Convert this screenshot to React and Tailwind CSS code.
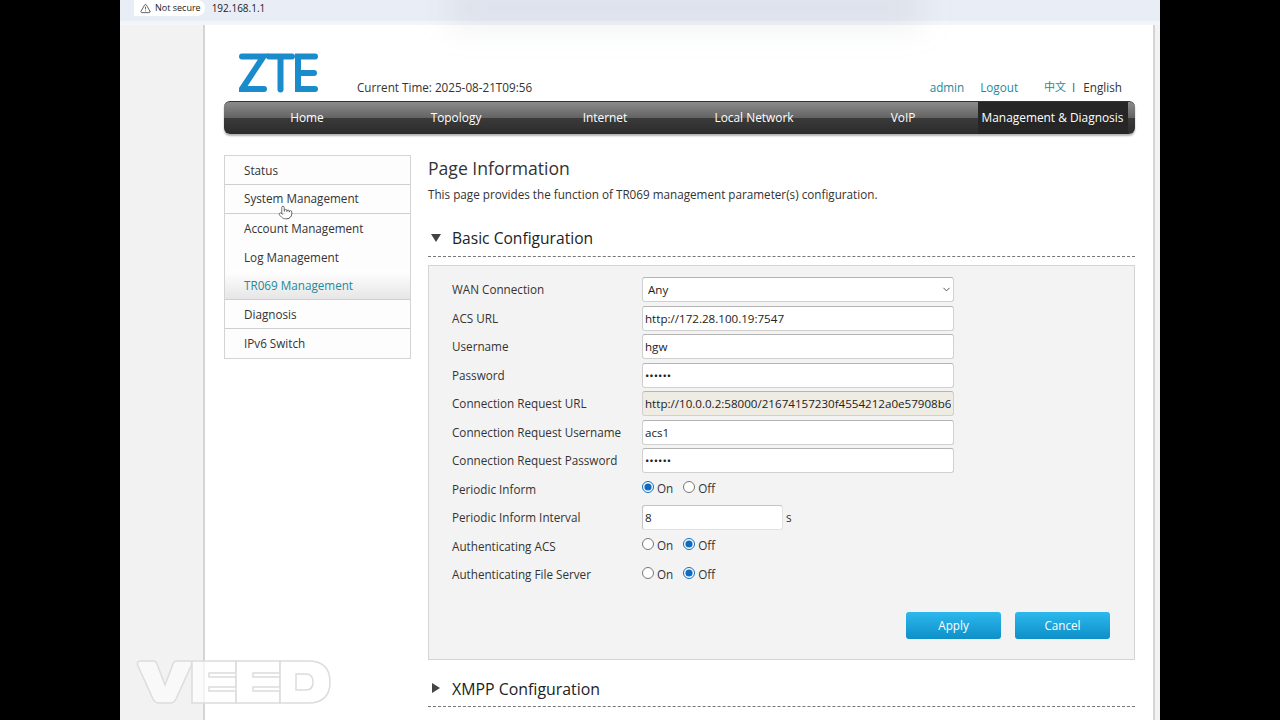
import { ChevronDown, TriangleAlert, Pointer } from 'lucide-react'

const NAV = ['Home', 'Topology', 'Internet', 'Local Network', 'VoIP']

const MENU = [
  { label: 'Status', line: true },
  { label: 'System Management', line: true },
  { label: 'Account Management' },
  { label: 'Log Management' },
  { label: 'TR069 Management', active: true, line: true },
  { label: 'Diagnosis', line: true },
  { label: 'IPv6 Switch' },
]

const inputClass =
  'h-[25px] w-[312px] rounded-[3px] border border-[#d0d0d0] border-t-[#b4b4b4] px-[2px] text-[11.6px] text-[#222] outline-none'

function Row({ label, children }) {
  return (
    <div className="flex h-[28.5px] items-center">
      <span className="w-[190px] shrink-0 text-[11.7px] text-[#333]">{label}</span>
      {children}
    </div>
  )
}

function TextRow({ label, value, type = 'text', bg = 'bg-white' }) {
  return (
    <Row label={label}>
      <input readOnly type={type} value={value} className={`${inputClass} ${bg}`} />
    </Row>
  )
}

function Radio({ label, on, name }) {
  return (
    <label className="mr-[10px] flex items-center gap-[3px] pb-[1px] text-[11.7px] text-[#333]">
      <input type="radio" name={name} readOnly checked={on} className="m-0 -mt-[3px] h-[12px] w-[12px] accent-[#0f6cbd]" />
      {label}
    </label>
  )
}

function OnOff({ label, on, name }) {
  return (
    <Row label={label}>
      <Radio label="On" on={on} name={name} />
      <Radio label="Off" on={!on} name={name} />
    </Row>
  )
}

function SectionTitle({ open, children }) {
  return (
    <div className="flex h-[36px] items-center border-b border-dashed border-[#777]">
      <span className={open ? 'ml-[3px] h-0 w-0 border-x-[5px] border-t-[8px] border-x-transparent border-t-[#444]' : 'ml-[4px] h-0 w-0 border-y-[5px] border-l-[8px] border-y-transparent border-l-[#444]'} />
      <h2 className={open ? 'ml-[11px] pt-[2px] text-[15.6px] text-[#222]' : 'ml-[12px] pt-[4px] text-[15.9px] text-[#222]'}>{children}</h2>
    </div>
  )
}

function ZteLogo() {
  return (
    <svg width="80" height="40" viewBox="0 0 80 40" fill="none" stroke="#1a8ccb" strokeWidth="6" strokeLinejoin="miter" strokeLinecap="round">
      <path d="M3 3.5 H24.5 L3 36 H25" />
      <path d="M30 3.5 H53 M41.5 4 V36.5" />
      <path d="M76 3.5 H59 V36 H76 M59 20 H75" />
    </svg>
  )
}

function VeedMark() {
  return (
    <svg width="196" height="44" viewBox="0 0 196 44" fill="#ffffff" fillOpacity="0.55" stroke="#dcdcdc" strokeWidth="1.5">
      <path d="M2 6 Q0 1 5 1 H17 Q20 1 21 4 L29 25 L37 4 Q38 1 41 1 H53 Q57 1 55 6 L40 39 Q38 43 34 43 H23 Q19 43 17 39 Z" />
      <path d="M56 1 H100 V13 H73 V17 H100 V27 H73 V31 H100 V43 H56 Z" fillOpacity="0.7" />
      <path d="M100 1 H144 V13 H117 V17 H144 V27 H117 V31 H144 V43 H100 Z" fillOpacity="0.7" />
      <path d="M144 1 H172 Q194 1 194 22 Q194 43 172 43 H144 Z M160 14 V30 H170 Q177 30 177 22 Q177 14 170 14 Z" fillOpacity="0.7" fillRule="evenodd" />
    </svg>
  )
}

export default function App() {
  return (
    <div className="relative flex h-[720px] w-[1280px] justify-center overflow-hidden bg-black font-['Open_Sans','Noto_Sans',sans-serif]">
      <div className="flex w-[1040px] flex-col bg-white">
        {/* browser address bar */}
        <div className="flex h-[21px] shrink-0 items-start bg-[#e9edf6] pl-[14px]">
          <div className="flex h-[16px] items-center gap-[4px] rounded-r-full bg-white pl-[6px] pr-[4px] text-[9px] text-[#222]">
            <TriangleAlert size={11} strokeWidth={1.5} />
            Not secure
          </div>
          <span className="ml-[7px] text-[10px] leading-[16px] text-[#222]">192.168.1.1</span>
        </div>
        <div className="h-[4px] shrink-0 bg-[#f4f5f8]" />

        <div className="flex min-h-0 flex-1">
          <div className="w-[83px] shrink-0 bg-[#f2f2f2]" />
          <div className="min-w-0 w-[952px] shrink-0 border-x-[2px] border-[#d4d4d4] bg-white pl-[19px] pr-[18px]">
            <div className="flex h-[76px] items-end pb-[4px]">
              <div className="mb-[4px] ml-[15px]"><ZteLogo /></div>
              <span className="ml-[38px] text-[11.7px] text-[#333]">Current Time: 2025-08-21T09:56</span>
              <div className="ml-auto flex pr-[13px] text-[11.7px]">
                <span className="text-[#1d8a9e]">admin</span>
                <span className="ml-[16px] text-[#1d8a9e]">Logout</span>
                <span className="ml-[26px] font-['Open_Sans','Noto_Sans_CJK_SC',sans-serif] text-[11px] leading-[16px] text-[#1d8a9e]">中文</span>
                <span className="ml-[6px] text-[#555]">I</span>
                <span className="ml-[8px] text-[#333]">English</span>
              </div>
            </div>

            <nav className="flex h-[33px] items-stretch overflow-hidden rounded-[6px] border-t border-[#333] bg-[linear-gradient(#8c8c8c_0%,#626262_50%,#3a3a3a_51%,#2c2c2c_100%)] pl-[8.5px] text-[11.9px] text-white shadow-[0_2px_2px_rgba(0,0,0,0.3)]">
              {NAV.map((item) => (
                <div key={item} className="flex w-[149px] items-center justify-center">{item}</div>
              ))}
              <div className="flex w-[150px] items-center justify-center whitespace-nowrap bg-[#262626]">Management &amp; Diagnosis</div>
            </nav>

            <div className="mt-[21px] flex gap-[17px]">
              <aside className="w-[187px] shrink-0 self-start border border-[#d4d4d4]">
                {MENU.map((m) => (
                  <div
                    key={m.label}
                    className={`flex h-[28.8px] items-center pl-[19px] pt-[1px] text-[11.7px] ${m.line ? 'border-b border-[#cfcfcf]' : ''} ${m.active ? 'bg-[linear-gradient(#ffffff,#e6e6e6)] text-[#1d8a9e]' : 'bg-[#fdfdfd] text-[#333]'}`}
                  >
                    {m.label}
                  </div>
                ))}
              </aside>

              <main className="min-w-0 flex-1">
                <h1 className="text-[17.6px] leading-[26px] text-[#333]">Page Information</h1>
                <p className="mt-[5px] text-[11.7px] text-[#333]">This page provides the function of TR069 management parameter(s) configuration.</p>

                <div className="mt-[17px]"><SectionTitle open>Basic Configuration</SectionTitle></div>

                <section className="mt-[8px] h-[395px] border border-[#d5d5d5] bg-[#f3f3f3] pl-[23px] pt-[10px]">
                  <Row label="WAN Connection">
                    <div className="relative w-[312px]">
                      <select className={`${inputClass} block appearance-none bg-white pl-[5px]`}>
                        <option>Any</option>
                      </select>
                      <ChevronDown size={11} strokeWidth={2} className="absolute right-[2px] top-[7px] text-[#444]" />
                    </div>
                  </Row>
                  <TextRow label="ACS URL" value="http://172.28.100.19:7547" />
                  <TextRow label="Username" value="hgw" />
                  <TextRow label="Password" type="password" value="aaaaaa" />
                  <TextRow label="Connection Request URL" value="http://10.0.0.2:58000/21674157230f4554212a0e57908b6" bg="bg-[#efece3]" />
                  <TextRow label="Connection Request Username" value="acs1" />
                  <TextRow label="Connection Request Password" type="password" value="aaaaaa" />
                  <OnOff label="Periodic Inform" on name="periodic" />
                  <Row label="Periodic Inform Interval">
                    <input readOnly value="8" className="h-[25px] w-[141px] rounded-[3px] border border-[#e2e2e2] border-l-[#c4c4c4] border-t-[#c4c4c4] bg-white px-[2px] text-[11.6px] text-[#222] outline-none" />
                    <span className="ml-[3px] text-[11.7px] text-[#333]">s</span>
                  </Row>
                  <OnOff label="Authenticating ACS" on={false} name="acs" />
                  <OnOff label="Authenticating File Server" on={false} name="file" />

                  <div className="mr-[24px] mt-[23px] flex justify-end gap-[14px]">
                    <button className="h-[27px] w-[95px] rounded-[3px] bg-[linear-gradient(#2cb8ee,#0e8fc8)] text-[11.7px] text-white">Apply</button>
                    <button className="h-[27px] w-[95px] rounded-[3px] bg-[linear-gradient(#2cb8ee,#0e8fc8)] text-[11.7px] text-white">Cancel</button>
                  </div>
                </section>

                <div className="mt-[11px]"><SectionTitle>XMPP Configuration</SectionTitle></div>
              </main>
            </div>
          </div>
          <div className="w-[5px] shrink-0 bg-[#f2f2f2]" />
        </div>
      </div>

      {/* smudge in the video frame, cursor and watermark sit over the page */}
      <div className="absolute left-[450px] top-[-10px] h-[36px] w-[470px] bg-[#8d93a3]/15 blur-lg" />
      <Pointer size={15} strokeWidth={1.1} className="absolute left-[278px] top-[205px] fill-white text-[#333]" />
      <div className="absolute left-[136px] top-[660px]"><VeedMark /></div>
    </div>
  )
}
